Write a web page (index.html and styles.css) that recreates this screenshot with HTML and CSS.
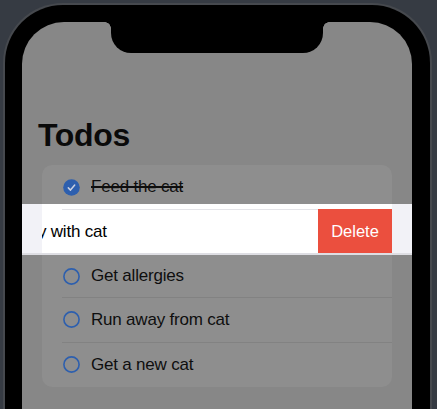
FILE: index.html
```html
<!DOCTYPE html>
<html>
<head>
<meta charset="utf-8">
<link rel="stylesheet" href="styles.css">
</head>
<body>
<div class="phone">
  <div class="screen">
    <div class="notch"></div>
    <h1 class="title">Todos</h1>
    <div class="card">
      <div class="row row-first">
        <svg class="check" width="17" height="17" viewBox="0 0 17 17"><circle cx="8.5" cy="8.5" r="8.3" fill="#2d5fae"/><path d="M5.3 8.9 L7.5 11.1 L11.7 6.1" fill="none" stroke="#c9d1e2" stroke-width="1.5" stroke-linecap="round" stroke-linejoin="round"/></svg>
        <span class="label done">Feed the cat</span>
      </div>
      <div class="swipe">
        <div class="swipe-inner">
          <div class="swipe-row">
            <svg class="check" width="17" height="17" viewBox="0 0 17 17"><circle cx="8.5" cy="8.5" r="7.6" fill="none" stroke="#007aff" stroke-width="1.6"/></svg>
            <span class="label light">Play with cat</span>
          </div>
          <button class="delete">Delete</button>
        </div>
      </div>
      <div class="row row-third">
        <svg class="check" width="17" height="17" viewBox="0 0 17 17"><circle cx="8.5" cy="8.5" r="7.6" fill="none" stroke="#2d5fae" stroke-width="1.6"/></svg>
        <span class="label">Get allergies</span>
      </div>
      <div class="row sep">
        <svg class="check" width="17" height="17" viewBox="0 0 17 17"><circle cx="8.5" cy="8.5" r="7.6" fill="none" stroke="#2d5fae" stroke-width="1.6"/></svg>
        <span class="label">Run away from cat</span>
      </div>
      <div class="row sep">
        <svg class="check" width="17" height="17" viewBox="0 0 17 17"><circle cx="8.5" cy="8.5" r="7.6" fill="none" stroke="#2d5fae" stroke-width="1.6"/></svg>
        <span class="label">Get a new cat</span>
      </div>
    </div>
  </div>
</div>
</body>
</html>
```

FILE: styles.css
```css
* { box-sizing: border-box; }
html, body {
  margin: 0;
  height: 409px;
  overflow: hidden;
  background: #363b43;
}
body {
  font-family: "Liberation Sans", Arial, sans-serif;
}
.phone {
  margin: 3px 0 0 3px;
  width: 429px;
  height: 406px;
  background: #000;
  border: 2px solid #46494e;
  border-bottom: none;
  border-radius: 60px 60px 0 0;
  padding: 17px 18px 0 17px;
}
.screen {
  position: relative;
  height: 387px;
  background: #878787;
  border-radius: 42px 42px 0 0;
  padding: 94px 20px 0 20px;
}
.notch {
  position: absolute;
  top: 0;
  left: 89px;
  width: 212px;
  height: 31px;
  background: #000;
  border-radius: 0 0 20px 20px;
}
.notch::before,
.notch::after {
  content: "";
  position: absolute;
  top: 0;
  width: 6px;
  height: 6px;
}
.notch::before {
  left: -6px;
  background: radial-gradient(circle at 0 100%, transparent 5.5px, #000 6px);
}
.notch::after {
  right: -6px;
  background: radial-gradient(circle at 100% 100%, transparent 5.5px, #000 6px);
}
.title {
  margin: 0 0 11px -4px;
  font-size: 32px;
  line-height: 38px;
  font-weight: 700;
  letter-spacing: -0.3px;
  color: #0a0a0a;
}
.card {
  background: #8e8e8e;
  border-radius: 10px;
}
.row {
  position: relative;
  display: flex;
  align-items: center;
  height: 45px;
  padding-left: 21px;
}
.row-first { height: 44px; }
.row-third { height: 42px; }
.sep::before {
  content: "";
  position: absolute;
  top: 0;
  left: 20px;
  right: 0;
  height: 1px;
  background: #828282;
}
.check {
  flex: none;
  display: block;
}
.label {
  margin-left: 11px;
  font-size: 17px;
  letter-spacing: -0.2px;
  color: #0e0e0e;
}
.label.done {
  text-decoration: line-through;
  text-decoration-thickness: 1.5px;
}
.label.light { color: #000; }
.swipe {
  position: relative;
  margin: -5px -20px 0;
  padding: 0 20px;
  background: #f2f2f7;
  border-bottom: 2px solid #dedee3;
}
.swipe-inner {
  position: relative;
  height: 49px;
  background: #fff;
  overflow: hidden;
}
.swipe-inner::before {
  content: "";
  position: absolute;
  top: 5px;
  left: 20px;
  right: 0;
  height: 1px;
  background: #e4e4e8;
}
.swipe-row {
  display: flex;
  align-items: center;
  height: 44px;
  margin-top: 5px;
  padding-top: 1px;
  padding-left: 21px;
  transform: translateX(-77px);
}
.delete {
  position: absolute;
  top: 5px;
  right: 0;
  width: 74px;
  height: 44px;
  border: none;
  margin: 0;
  padding: 0;
  background: #eb4f3e;
  color: #fff;
  font-family: "Liberation Sans", Arial, sans-serif;
  font-size: 16.5px;
}
```
